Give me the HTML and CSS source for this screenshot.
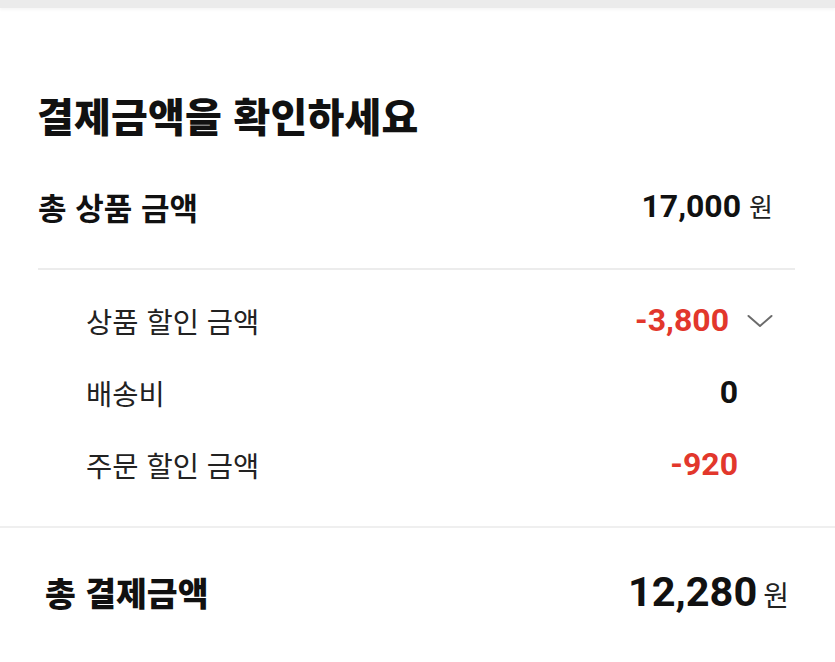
FILE: index.html
```html
<!DOCTYPE html>
<html lang="ko">
<head>
<meta charset="utf-8">
<link rel="stylesheet" href="styles.css">
</head>
<body>
<div class="topbar"></div>
<section class="panel">
  <h1 class="title">결제금액을 확인하세요</h1>
  <div class="row summary">
    <span class="label-strong">총 상품 금액</span>
    <span class="amount"><span class="num">17,000</span><span class="won">원</span></span>
  </div>
  <div class="divider"></div>
  <ul class="details">
    <li class="detail">
      <span class="label">상품 할인 금액</span>
      <span class="val-wrap">
        <span class="num red">-3,800</span>
        <svg class="chev" width="26" height="14" viewBox="0 0 26 14"><polyline points="1.5,2 13,12 24.5,2" fill="none" stroke="#6b6b6b" stroke-width="2" stroke-linecap="round" stroke-linejoin="round"/></svg>
      </span>
    </li>
    <li class="detail plain">
      <span class="label">배송비</span>
      <span class="num">0</span>
    </li>
    <li class="detail plain">
      <span class="label">주문 할인 금액</span>
      <span class="num red">-920</span>
    </li>
  </ul>
</section>
<div class="divider-full"></div>
<div class="row grand">
  <span class="label-grand">총 결제금액</span>
  <span class="amount"><span class="num big">12,280</span><span class="won big-won">원</span></span>
</div>
</body>
</html>
```
FILE: styles.css
```css
html, body {
  margin: 0;
  padding: 0;
  background: #ffffff;
}
body {
  width: 835px;
  height: 662px;
  overflow: hidden;
  font-family: "Noto Sans CJK KR", "Noto Sans", sans-serif;
  color: #111111;
}
.topbar {
  height: 8px;
  background: #ebebeb;
  box-shadow: 0 2px 3px rgba(0,0,0,0.04);
}
.title {
  margin: 0;
  padding: 84px 0 0 37px;
  font-size: 40px;
  line-height: 46px;
  font-weight: 800;
  letter-spacing: 0.2px;
}
.row {
  display: flex;
  align-items: center;
  justify-content: space-between;
  height: 60px;
}
.summary {
  margin-top: 38px;
  padding: 0 62px 0 38px;
}
.label-strong {
  font-size: 31px;
  font-weight: 700;
}
.amount {
  display: flex;
  align-items: baseline;
}
.num {
  font-family: Roboto, "Noto Sans", sans-serif;
  font-weight: 700;
  font-size: 32px;
  color: #111111;
}
.won {
  font-size: 26px;
  font-weight: 400;
  margin-left: 6px;
  color: #222222;
}
.summary .won {
  margin-left: 8px;
}
.divider {
  height: 2px;
  background: #ececec;
  margin: 32px 40px 0 38px;
}
.details {
  list-style: none;
  margin: 0;
  padding: 14px 0 0 0;
}
.detail {
  display: flex;
  align-items: center;
  justify-content: space-between;
  height: 72px;
  padding: 0 62px 0 86px;
}
.detail.plain {
  padding-right: 97px;
}
.label {
  font-size: 28.5px;
  font-weight: 400;
  color: #222222;
}
.val-wrap {
  display: flex;
  align-items: center;
}
.red {
  color: #e2372c;
}
.chev {
  margin-left: 18px;
  margin-top: 2px;
}
.divider-full {
  height: 2px;
  background: #efefef;
  margin-top: 26px;
}
.grand {
  margin-top: 33px;
  padding: 0 46px 0 45px;
}
.label-grand {
  font-size: 33.5px;
  font-weight: 800;
}
.big {
  font-size: 41.5px;
}
.big-won {
  font-size: 28px;
  margin-left: 6px;
}
```
